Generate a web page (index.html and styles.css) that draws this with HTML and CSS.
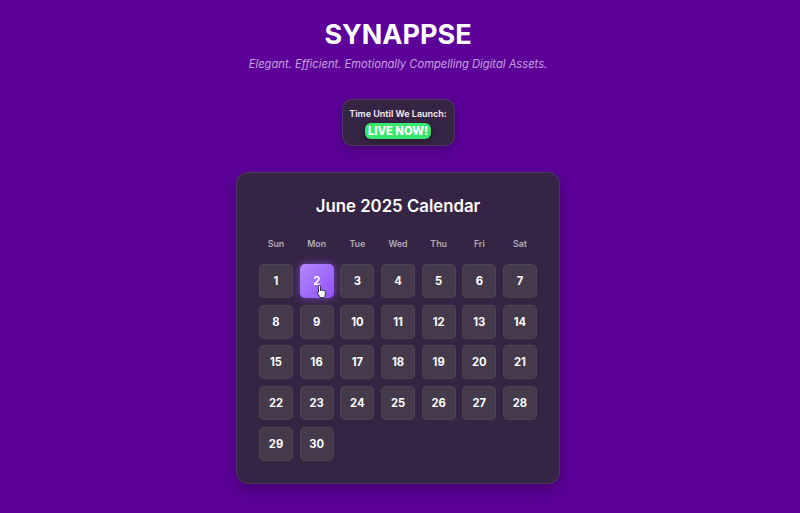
FILE: index.html
```html
<!DOCTYPE html>
<html lang="en">
<head>
    <meta charset="UTF-8">
    <meta name="viewport" content="width=device-width, initial-scale=1.0">
    <title>SYNAPPSE</title>
    <link rel="stylesheet" href="styles.css">
</head>
<body>
    <header class="site-header">
        <h1>SYNAPPSE</h1>
        <p class="tagline">Elegant. Efficient. Emotionally Compelling Digital Assets.</p>
    </header>

    <div class="countdown">
        <div class="countdown-label">Time Until We Launch:</div>
        <div class="live-badge">LIVE NOW!</div>
    </div>

    <main class="calendar">
        <h2>June 2025 Calendar</h2>
        <div class="weekdays">
            <div>Sun</div><div>Mon</div><div>Tue</div><div>Wed</div><div>Thu</div><div>Fri</div><div>Sat</div>
        </div>
        <div class="days">
            <div class="day">1</div>
            <div class="day day-active">2
                <svg class="cursor" viewBox="0 0 14 17" width="12" height="15">
                    <path d="M4 1.2c.7 0 1.2.5 1.2 1.2v5l.6-.2c.3-.6 1.4-.6 1.7.1.4-.5 1.4-.4 1.7.3.5-.4 1.5-.1 1.6.7.1 1.300.1 3 0 4.200-.1 1.300-.8 2.500-1.600 3.200H5.300L1.400 10.200c-.6-.8.5-1.800 1.300-1.100l.2.200V2.400c0-.7.500-1.200 1.100-1.200z" fill="#fff" stroke="#111" stroke-width="1"/>
                </svg>
            </div>
            <div class="day">3</div>
            <div class="day">4</div>
            <div class="day">5</div>
            <div class="day">6</div>
            <div class="day">7</div>
            <div class="day">8</div>
            <div class="day">9</div>
            <div class="day">10</div>
            <div class="day">11</div>
            <div class="day">12</div>
            <div class="day">13</div>
            <div class="day">14</div>
            <div class="day">15</div>
            <div class="day">16</div>
            <div class="day">17</div>
            <div class="day">18</div>
            <div class="day">19</div>
            <div class="day">20</div>
            <div class="day">21</div>
            <div class="day">22</div>
            <div class="day">23</div>
            <div class="day">24</div>
            <div class="day">25</div>
            <div class="day">26</div>
            <div class="day">27</div>
            <div class="day">28</div>
            <div class="day">29</div>
            <div class="day">30</div>
        </div>
    </main>
</body>
</html>
```

FILE: styles.css
```css
* {
    box-sizing: border-box;
}
body {
    margin: 0;
    height: 513px;
    overflow: hidden;
    padding-right: 4px;
    background-color: #5c0099;
    color: #fff;
    font-family: Inter, "Liberation Sans", sans-serif;
    display: flex;
    flex-direction: column;
    align-items: center;
}
.site-header {
    text-align: center;
    padding-top: 16px;
}
h1 {
    margin: 0;
    font-size: 27px;
    line-height: 38px;
    font-weight: 700;
}
.tagline {
    margin: 2px 0 0;
    font-size: 11.200px;
    line-height: 16px;
    font-style: italic;
    color: rgba(255, 255, 255, 0.65);
}
.countdown {
    margin-top: 27px;
    width: 113px;
    height: 47px;
    padding-top: 8px;
    background-color: #362444;
    border: 1px solid rgba(255, 255, 255, 0.1);
    border-radius: 10px;
    box-shadow: 0 4px 12px rgba(0, 0, 0, 0.25);
    text-align: center;
}
.countdown-label {
    font-size: 9px;
    line-height: 11px;
    font-weight: 600;
    white-space: nowrap;
    color: #f2f0f4;
}
.live-badge {
    display: inline-block;
    padding: 0 3px;
    font-size: 11.200px;
    line-height: 16px;
    font-weight: 800;
    background-color: #39e670;
    border-radius: 6px;
    box-shadow: 0 2px 6px rgba(0, 0, 0, 0.3);
}
.calendar {
    margin-top: 26px;
    width: 324px;
    height: 312px;
    padding: 21px 22px;
    background-color: #362444;
    border: 1px solid rgba(255, 255, 255, 0.1);
    border-radius: 12px;
    box-shadow: 0 6px 16px rgba(0, 0, 0, 0.28);
}
h2 {
    margin: 0;
    text-align: center;
    font-size: 16.800px;
    line-height: 24px;
    font-weight: 600;
}
.weekdays,
.days {
    display: grid;
    grid-template-columns: repeat(7, 1fr);
    gap: 6.670px;
}
.weekdays {
    margin-top: 20px;
    text-align: center;
    font-size: 8.800px;
    line-height: 12px;
    font-weight: 600;
    color: rgba(255, 255, 255, 0.62);
}
.days {
    margin-top: 14px;
}
.day {
    position: relative;
    height: 34px;
    display: flex;
    align-items: center;
    justify-content: center;
    font-size: 11.200px;
    font-weight: 700;
    background-color: #443a4b;
    border: 1px solid rgba(255, 255, 255, 0.05);
    border-radius: 5px;
}
.day-active {
    background-image: linear-gradient(135deg, #b388ff, #9052f7);
    border: none;
    box-shadow: 0 0 8px rgba(157, 92, 255, 0.6);
}
.cursor {
    position: absolute;
    left: 16px;
    top: 20px;
}
```
